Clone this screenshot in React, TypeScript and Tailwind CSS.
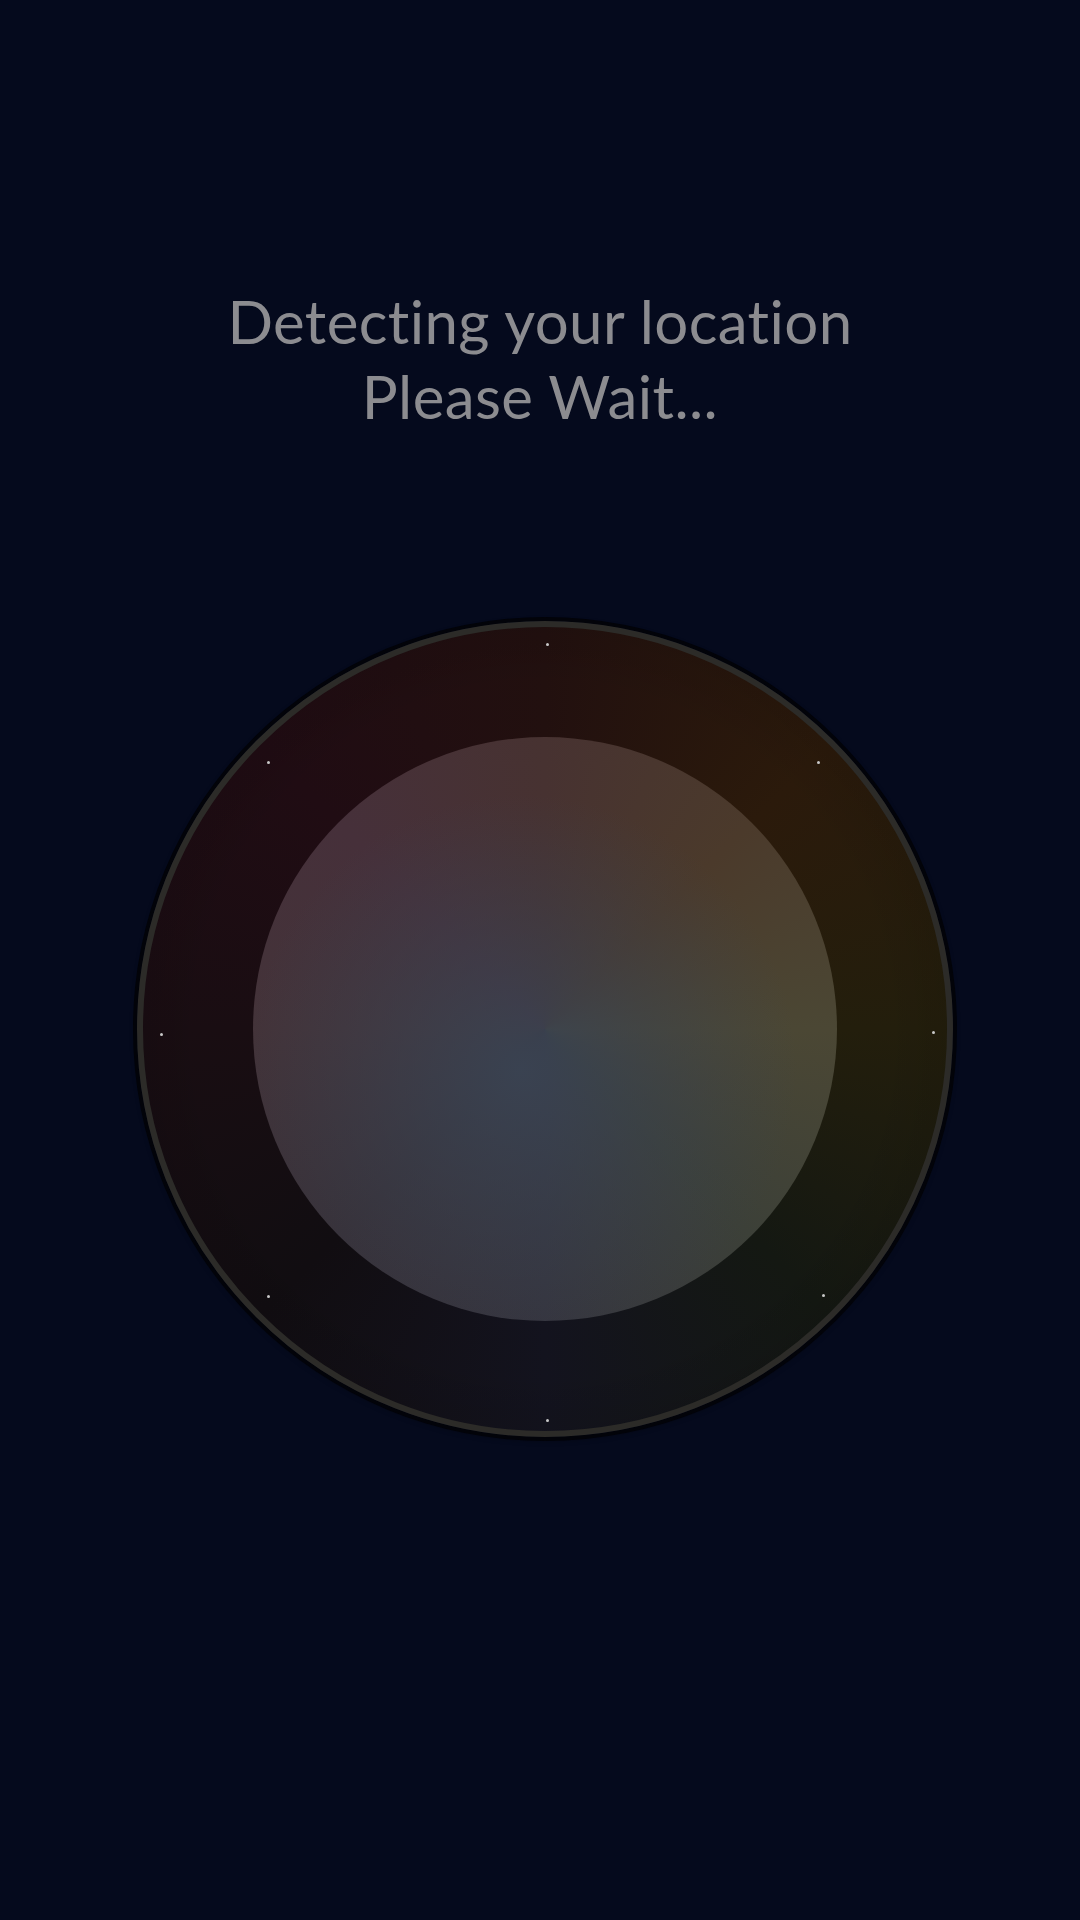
import React from "react";

// 8 markers around the dial (compass points)
const DOTS = [
  "left-[403px] top-[16px]",
  "left-[674px] top-[134px]",
  "left-[789px] top-[404px]",
  "left-[679px] top-[667px]",
  "left-[403px] top-[792px]",
  "left-[124px] top-[668px]",
  "left-[17px] top-[406px]",
  "left-[124px] top-[134px]",
];

function Dial() {
  return (
    <div className="flex w-full justify-center pl-[10px]">
      <div className="relative flex h-[816px] w-[816px] items-center justify-center rounded-full border-[6px] border-[#2c2b28] bg-[image:radial-gradient(circle,transparent_60%,rgba(0,0,0,0.3)_100%),conic-gradient(from_0deg,#22100f,#2b1a0b_45deg,#231e0c_90deg,#141812_135deg,#13131e_180deg,#110d11_225deg,#190d12_270deg,#200c13_315deg,#22100f)] shadow-[0_0_0_4px_#020309,0_2px_6px_rgba(0,0,0,0.6)]">
        <div className="h-[584px] w-[584px] rounded-full bg-[image:radial-gradient(circle_at_46%_57%,rgba(58,67,82,0.95)_0%,rgba(58,66,80,0.5)_30%,transparent_60%),conic-gradient(from_0deg,#473231,#4b3a2b_45deg,#4b4734_90deg,#3c4038_135deg,#35353f_180deg,#373139_225deg,#433339_270deg,#46303a_315deg,#473231)]" />
        {DOTS.map((pos) => (
          <span
            key={pos}
            className={`absolute h-[3px] w-[3px] rounded-full bg-[#c8c8c8] ${pos}`}
          />
        ))}
      </div>
    </div>
  );
}

export default function App() {
  return (
    <div className="flex h-[1920px] w-full flex-col items-center bg-[#050a1d] pt-[284px] font-['Lato','Open_Sans',sans-serif]">
      <div className="text-center text-[60px] leading-[75px] tracking-[0.4px] text-[#8c8c90] [font-variant-ligatures:none]">
        <p>Detecting your location</p>
        <p>Please Wait...</p>
      </div>
      <div className="mt-[187px] w-full">
        <Dial />
      </div>
    </div>
  );
}
